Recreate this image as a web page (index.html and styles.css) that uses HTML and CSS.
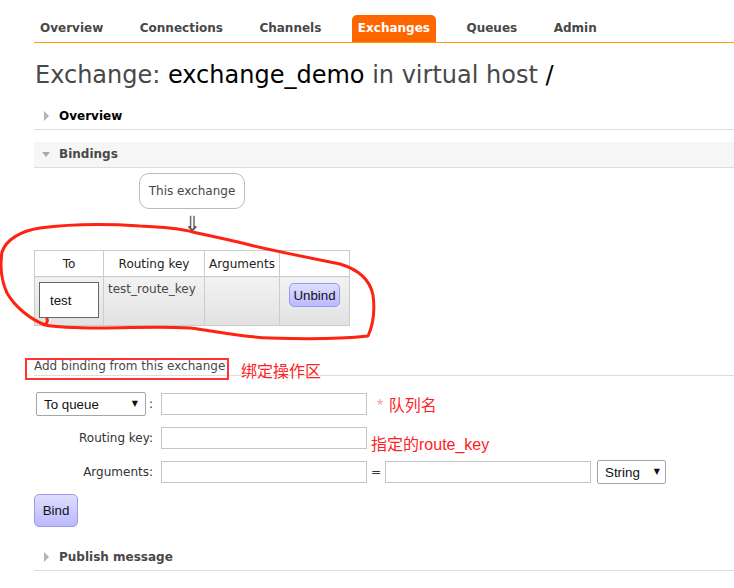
FILE: index.html
```html
<!DOCTYPE html>
<html>
<head>
<meta charset="utf-8">
<title>Exchange: exchange_demo</title>
<link rel="stylesheet" href="styles.css">
</head>
<body>
<div class="page">
  <nav class="tabs">
    <ul>
      <li><a>Overview</a></li>
      <li><a>Connections</a></li>
      <li><a>Channels</a></li>
      <li class="active"><a>Exchanges</a></li>
      <li><a>Queues</a></li>
      <li><a>Admin</a></li>
    </ul>
  </nav>

  <h1>Exchange: <b class="strong">exchange_demo</b> in virtual host <b class="strong">/</b></h1>

  <section class="section">
    <h2 class="sec-head closed dark">Overview</h2>
  </section>

  <section class="section">
    <h2 class="sec-head open shaded">Bindings</h2>
    <div class="sec-body">
      <div class="bindings">
        <div class="this-ex">This exchange</div>
        <div class="arrow">⇓</div>
        <table class="list">
          <colgroup><col class="c1"><col class="c2"><col class="c3"><col class="c4"></colgroup>
          <thead>
            <tr><th>To</th><th>Routing key</th><th>Arguments</th><th></th></tr>
          </thead>
          <tbody>
            <tr class="data">
              <td><span class="queue-box">test</span></td>
              <td>test_route_key</td>
              <td></td>
              <td class="center"><button class="btn unbind">Unbind</button></td>
            </tr>
          </tbody>
        </table>
      </div>

      <h3 class="add-title"><span class="boxed">Add binding from this exchange</span><span class="note note-title">绑定操作区</span></h3>

      <form class="bind-form">
        <div class="lbl"><span class="sel sel-queue"><select><option>To queue</option></select></span><span class="colon">:</span></div>
        <div class="field"><input type="text"><span class="note note-queue"><span class="star">*</span> 队列名</span></div>

        <div class="lbl">Routing key:</div>
        <div class="field"><input type="text"><span class="note note-key">指定的route_key</span></div>

        <div class="lbl">Arguments:</div>
        <div class="field"><input type="text"><span class="eq">=</span><input type="text"><span class="sel sel-type"><select><option>String</option></select></span></div>
      </form>

      <button class="btn bind">Bind</button>
    </div>
  </section>

  <section class="section section-last">
    <h2 class="sec-head closed">Publish message</h2>
  </section>
</div>

<svg class="scribble" width="734" height="588" viewBox="0 0 734 588">
  <path d="M40 228 C70 224 110 224 140 226 C165 227 182 229 193 232 C210 236 230 240 250 245 C280 252 310 258 340 264 C360 270 370 280 373 295 C375 310 373 325 368 336 C340 339 300 339 270 338 C240 337 215 331 190 328 C160 326 130 328 100 328 C75 328 55 327 45 325 C47 323 48 321 47 319 M45 325 C30 319 15 307 7 293 C1 280 0 265 2 252 C6 240 20 231 40 228" fill="none" stroke="#f21" stroke-width="3" stroke-linejoin="round" stroke-linecap="round"/>
</svg>
</body>
</html>
```

FILE: styles.css
```css
html, body {
  margin: 0;
  padding: 0;
  background: #fff;
}

body {
  font-family: "DejaVu Sans", Verdana, sans-serif;
  font-size: 12px;
  color: #484848;
  position: relative;
  min-height: 588px;
}

.page {
  padding: 15px 0 0 34px;
}

/* navigation tabs */
.tabs ul {
  display: flex;
  gap: 24.5px;
  list-style: none;
  margin: 0;
  padding: 0;
  border-bottom: 1px solid #f90;
}

.tabs a {
  display: block;
  padding: 0 6px;
  line-height: 27px;
  font-weight: bold;
  font-size: 12px;
  color: #484848;
}

.tabs .active a {
  background: #f60;
  color: #fff;
  border-radius: 5px 5px 0 0;
}

/* title */
h1 {
  margin: 17px 0 0 1px;
  font-size: 24px;
  line-height: 30px;
  font-weight: normal;
  color: #484848;
}

h1 .strong {
  font-weight: normal;
  color: #000;
}

/* sections */
.section {
  margin-top: 14px;
}

.section + .section {
  margin-top: 12px;
}

.section.section-last {
  margin-top: 18px;
}

.sec-head {
  position: relative;
  margin: 0;
  padding-left: 25px;
  font-size: 12px;
  font-weight: bold;
  line-height: 25px;
  border-bottom: 1px solid #ddd;
  color: #484848;
}

.sec-head.dark {
  color: #000;
}

.sec-head.shaded {
  background: #f6f6f6;
}

.sec-head::before {
  content: "";
  position: absolute;
  width: 0;
  height: 0;
}

.sec-head.closed::before {
  left: 10px;
  top: 7px;
  border-left: 5px solid #b4b4b4;
  border-top: 5px solid transparent;
  border-bottom: 5px solid transparent;
}

.sec-head.open::before {
  left: 8px;
  top: 10px;
  border-top: 5px solid #aaa;
  border-left: 4.5px solid transparent;
  border-right: 4.5px solid transparent;
}

.sec-body {
  padding-top: 5px;
}

/* bindings diagram */
.bindings {
  display: inline-flex;
  flex-direction: column;
  align-items: center;
}

.this-ex {
  box-sizing: border-box;
  width: 106px;
  height: 36px;
  line-height: 34px;
  text-align: center;
  border: 1px solid #bbb;
  border-radius: 10px;
  color: #484848;
}

.arrow {
  height: 41px;
  line-height: 22px;
  padding-top: 4px;
  box-sizing: border-box;
  font-size: 21px;
  color: #555;
}

table.list {
  border-collapse: collapse;
  table-layout: fixed;
  width: 316px;
  border: 1px solid #ccc;
}

.list col.c1 { width: 69px; }
.list col.c2 { width: 101px; }
.list col.c3 { width: 75px; }
.list col.c4 { width: 70px; }

.list th {
  height: 25px;
  padding: 0;
  font-weight: normal;
  font-size: 12px;
  color: #222;
  border: 1px solid #ccc;
  background: #fff;
  text-align: center;
  vertical-align: middle;
}

.list td {
  border: 1px solid #ccc;
  padding: 5px 4px 7px;
  vertical-align: top;
  line-height: 14px;
  color: #484848;
  background: linear-gradient(#f2f2f2, #e2e2e2);
}

.list td.center {
  text-align: center;
  padding-top: 6px;
}

.queue-box {
  display: block;
  box-sizing: border-box;
  width: 60px;
  height: 36px;
  padding-left: 10px;
  line-height: 36px;
  border: 1px solid #666;
  background: #fff;
  font-family: "Liberation Sans", Arial, sans-serif;
  font-size: 13.33px;
  color: #111;
}

.btn {
  font-family: "Liberation Sans", Arial, sans-serif;
  font-size: 13.33px;
  color: #111;
  border: 1px solid #99e;
  border-radius: 5px;
  background: linear-gradient(#dedeff, #babaff);
  cursor: pointer;
}

.btn.unbind {
  width: 51px;
  height: 24px;
  padding: 0;
}

.btn.bind {
  display: block;
  width: 44px;
  height: 33px;
  padding: 0;
  margin-top: 10px;
  border-color: #9a9ae6;
}

/* add binding */
.add-title {
  position: relative;
  margin: 31px 0 0;
  font-size: 12px;
  font-weight: normal;
  line-height: 18px;
  color: #484848;
  border-bottom: 1px solid #ddd;
}

.boxed {
  position: relative;
}

.boxed::before {
  content: "";
  position: absolute;
  left: -9px;
  top: -1px;
  width: 204px;
  height: 22px;
  box-sizing: border-box;
  border: 2px solid #f33;
}

.note {
  font-family: "Liberation Sans", "Noto Sans CJK SC", sans-serif;
  font-size: 16px;
  color: #f22;
  white-space: nowrap;
}

.note-title {
  position: absolute;
  left: 207px;
  top: 6px;
  line-height: 18px;
}

.bind-form {
  display: grid;
  grid-template-columns: 119px auto;
  grid-auto-rows: 24px;
  column-gap: 8px;
  row-gap: 10px;
  margin-top: 16px;
  align-items: center;
}

.lbl {
  display: flex;
  justify-content: flex-end;
  align-items: center;
  white-space: nowrap;
  color: #333;
}

.colon {
  margin-left: 3px;
  width: 4px;
}

.field {
  display: flex;
  align-items: center;
}

.field input {
  box-sizing: border-box;
  width: 206px;
  height: 22px;
  margin: 0;
  border: 1px solid #c4c4c4;
  background: #fff;
  font-family: "Liberation Sans", Arial, sans-serif;
  font-size: 13.33px;
}

.sel {
  position: relative;
  display: inline-block;
}

.sel select {
  appearance: none;
  -webkit-appearance: none;
  box-sizing: border-box;
  height: 24px;
  margin: 0;
  border: 1px solid #a6a6a6;
  border-radius: 2px;
  background: #fff;
  font-family: "Liberation Sans", Arial, sans-serif;
  font-size: 13.33px;
  color: #111;
}

.sel::after {
  content: "▼";
  position: absolute;
  top: 0;
  line-height: 24px;
  font-size: 8px;
  color: #111;
  pointer-events: none;
}

.sel-queue select {
  width: 110px;
  padding-left: 7px;
}

.sel-queue::after {
  right: 8px;
}

.sel-type {
  margin-left: 6px;
}

.sel-type select {
  width: 69px;
  padding-left: 7px;
}

.sel-type::after {
  right: 6px;
}

.eq {
  width: 18px;
  text-align: center;
  color: #333;
}

.note-queue {
  margin-left: 10px;
}

.star {
  color: #f99;
  margin-right: 1px;
}

.note-key {
  position: relative;
  top: 5px;
  margin-left: 4px;
}

/* annotation scribble */
.scribble {
  position: absolute;
  left: 0;
  top: 0;
  pointer-events: none;
}
```
